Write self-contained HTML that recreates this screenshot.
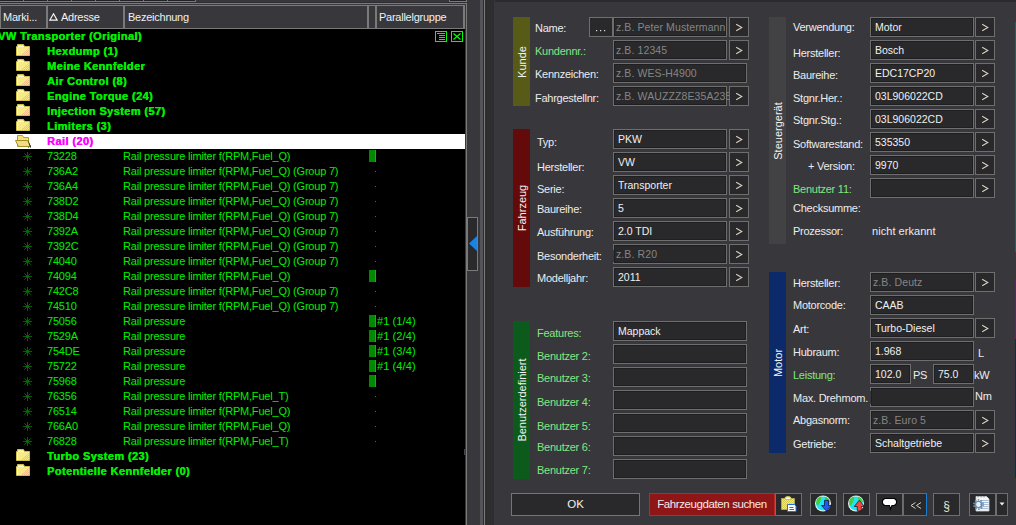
<!DOCTYPE html><html><head><meta charset="utf-8"><style>
*{margin:0;padding:0;box-sizing:border-box}
html,body{width:1016px;height:525px;overflow:hidden;background:#38373c;font-family:"Liberation Sans",sans-serif;position:relative}
.a{position:absolute}
.t{position:absolute;white-space:nowrap;font-size:11px;line-height:15px;color:#00f000;letter-spacing:-0.2px}
.b{font-weight:bold;letter-spacing:0.4px;text-shadow:0.35px 0 0 currentColor}
.hd{position:absolute;top:6px;height:22px;background:#38373c;border:1px solid #7a7a7a;border-top:none;border-bottom:none}
.ht{position:absolute;top:10px;font-size:11px;line-height:14px;color:#f0f0f0;white-space:nowrap;letter-spacing:-0.25px}
.lbl{position:absolute;white-space:nowrap;font-size:11px;line-height:14px;color:#ececec;letter-spacing:-0.25px}
.g{color:#80e880}
.inp{position:absolute;height:20px;background:#29292b;border:1px solid #6e6e6e;box-shadow:inset 0 0 0 1px #1f1f21}
.it{position:absolute;left:4px;top:3px;font-size:10.5px;line-height:13px;color:#f0f0f0;white-space:nowrap}
.ph{color:#858585;font-size:10.5px;left:2px;top:3px;letter-spacing:0.1px}
.btn{position:absolute;width:20px;height:20px;background:#29292b;border:1px solid #6e6e6e}
.chev{position:absolute;left:-1px;top:-1px}
.bar{position:absolute;width:17px}
.bt{position:absolute;left:50%;top:50%;white-space:nowrap;font-size:11px;line-height:12px;color:#f4f4f4;transform:translate(-50%,-50%) rotate(-90deg)}
</style></head><body>
<div class="a" style="left:0;top:0;width:467px;height:6px;background:#38373c"></div>
<div class="a" style="left:0;top:0;width:196px;height:2px;background:#7a7a7a"></div>
<div class="a" style="left:0px;top:0;width:23px;height:1px;background:#222226"></div>
<div class="a" style="left:24px;top:0;width:23px;height:1px;background:#222226"></div>
<div class="a" style="left:48px;top:0;width:23px;height:1px;background:#222226"></div>
<div class="a" style="left:72px;top:0;width:23px;height:1px;background:#222226"></div>
<div class="a" style="left:96px;top:0;width:23px;height:1px;background:#222226"></div>
<div class="a" style="left:120px;top:0;width:23px;height:1px;background:#222226"></div>
<div class="a" style="left:144px;top:0;width:23px;height:1px;background:#222226"></div>
<div class="a" style="left:168px;top:0;width:27px;height:1px;background:#222226"></div>
<div class="a" style="left:449px;top:0;width:18px;height:2px;background:#7a7a7a"></div>
<div class="a" style="left:450px;top:0;width:16px;height:1px;background:#222226"></div>
<div class="a" style="left:0;top:2px;width:466px;height:1px;background:#2e2e32"></div>
<div class="a" style="left:0;top:3px;width:467px;height:1px;background:#7a7a7a"></div>
<div class="a" style="left:0;top:4px;width:465px;height:1px;background:#3a3a3e"></div>
<div class="a" style="left:0;top:5px;width:465px;height:1px;background:#7a7a7a"></div>
<div class="a" style="left:466px;top:3px;width:1px;height:522px;background:#7a7a7a"></div>
<div class="a" style="left:0;top:6px;width:465px;height:22px;background:#38373c"></div>
<div class="a" style="left:0px;top:6px;width:1px;height:22px;background:#7a7a7a"></div>
<div class="a" style="left:46px;top:6px;width:2px;height:22px;background:#7a7a7a"></div>
<div class="a" style="left:123px;top:6px;width:2px;height:22px;background:#7a7a7a"></div>
<div class="a" style="left:367px;top:6px;width:2px;height:22px;background:#7a7a7a"></div>
<div class="a" style="left:375px;top:6px;width:2px;height:22px;background:#7a7a7a"></div>
<div class="a" style="left:463px;top:6px;width:2px;height:22px;background:#7a7a7a"></div>
<div class="a" style="left:0;top:28px;width:465px;height:1px;background:#7a7a7a"></div>
<div class="ht" style="left:3px">Marki...</div>
<svg class="a" style="left:49px;top:13px" width="9" height="8"><path d="M4.5 0.8 L8.2 7.2 L0.8 7.2 Z" fill="none" stroke="#f4f4f4" stroke-width="1.2"/></svg>
<div class="ht" style="left:61px">Adresse</div>
<div class="ht" style="left:128px">Bezeichnung</div>
<div class="ht" style="left:379px">Parallelgruppe</div>
<div class="a" style="left:0;top:29px;width:465px;height:496px;background:#000"></div>
<svg width="0" height="0" style="position:absolute"><defs><pattern id="dith" width="2" height="2" patternUnits="userSpaceOnUse"><rect width="1" height="1" fill="#f4b888"/><rect x="1" y="1" width="1" height="1" fill="#f4b888"/></pattern><pattern id="clipd" width="2" height="2" patternUnits="userSpaceOnUse"><rect width="2" height="2" fill="#e8e4b0"/><rect width="1" height="1" fill="#d8cc50"/><rect x="1" y="1" width="1" height="1" fill="#d8cc50"/></pattern></defs></svg>
<svg class="a" style="left:435px;top:31px" width="12" height="11"><rect x="0.5" y="0.5" width="11" height="10" fill="none" stroke="#00ff00"/><path d="M2 2.5H10M4 4.5H10M4 6.5H10M4 8.5H10" stroke="#00ff00" stroke-width="1"/></svg>
<svg class="a" style="left:451px;top:31px" width="12" height="11"><rect x="0.5" y="0.5" width="11" height="10" fill="none" stroke="#00ff00"/><path d="M2.5 2.5L9.5 8.5M9.5 2.5L2.5 8.5" stroke="#00ff00" stroke-width="1.3"/></svg>
<div class="t b" style="left:-2px;top:29px">VW Transporter (Original)</div>
<svg class="a" style="left:15px;top:43px" width="16" height="14"><path d="M2.5 1.5H8.5L9.5 3.5H14.5V12.5H1.5V3.5H2.5Z" fill="#f8ea88" stroke="#d0c048"/><path d="M3 3.5H9M2.5 4V12" stroke="#fffce0"/><path d="M6 12L14 5V12Z" fill="url(#dith)"/></svg>
<div class="t b" style="left:47px;top:44px">Hexdump (1)</div>
<svg class="a" style="left:15px;top:58px" width="16" height="14"><path d="M2.5 1.5H8.5L9.5 3.5H14.5V12.5H1.5V3.5H2.5Z" fill="#f8ea88" stroke="#d0c048"/><path d="M3 3.5H9M2.5 4V12" stroke="#fffce0"/><path d="M6 12L14 5V12Z" fill="url(#dith)"/></svg>
<div class="t b" style="left:47px;top:59px">Meine Kennfelder</div>
<svg class="a" style="left:15px;top:73px" width="16" height="14"><path d="M2.5 1.5H8.5L9.5 3.5H14.5V12.5H1.5V3.5H2.5Z" fill="#f8ea88" stroke="#d0c048"/><path d="M3 3.5H9M2.5 4V12" stroke="#fffce0"/><path d="M6 12L14 5V12Z" fill="url(#dith)"/></svg>
<div class="t b" style="left:47px;top:74px">Air Control (8)</div>
<svg class="a" style="left:15px;top:88px" width="16" height="14"><path d="M2.5 1.5H8.5L9.5 3.5H14.5V12.5H1.5V3.5H2.5Z" fill="#f8ea88" stroke="#d0c048"/><path d="M3 3.5H9M2.5 4V12" stroke="#fffce0"/><path d="M6 12L14 5V12Z" fill="url(#dith)"/></svg>
<div class="t b" style="left:47px;top:89px">Engine Torque (24)</div>
<svg class="a" style="left:15px;top:103px" width="16" height="14"><path d="M2.5 1.5H8.5L9.5 3.5H14.5V12.5H1.5V3.5H2.5Z" fill="#f8ea88" stroke="#d0c048"/><path d="M3 3.5H9M2.5 4V12" stroke="#fffce0"/><path d="M6 12L14 5V12Z" fill="url(#dith)"/></svg>
<div class="t b" style="left:47px;top:104px">Injection System (57)</div>
<svg class="a" style="left:15px;top:118px" width="16" height="14"><path d="M2.5 1.5H8.5L9.5 3.5H14.5V12.5H1.5V3.5H2.5Z" fill="#f8ea88" stroke="#d0c048"/><path d="M3 3.5H9M2.5 4V12" stroke="#fffce0"/><path d="M6 12L14 5V12Z" fill="url(#dith)"/></svg>
<div class="t b" style="left:47px;top:119px">Limiters (3)</div>
<div class="a" style="left:0;top:134px;width:465px;height:15px;background:#fff"></div>
<svg class="a" style="left:15px;top:134px" width="17" height="15"><path d="M2.5 1.5H7.5L8.5 3.5H13.5V12.5H2.5Z" fill="#f6e27a" stroke="#b0a030"/><path d="M14 6V13.5H13Z" fill="#000"/><path d="M0.5 6.5H12.5L15.5 12.5H3.5Z" fill="#f2da88" stroke="#a09020"/><path d="M13 6L16 12.5V13.5H15Z" fill="#222"/></svg>
<div class="t b" style="left:47px;top:134px;color:#ff00ff">Rail (20)</div>
<svg class="a" style="left:23px;top:152px" width="9" height="9"><path d="M4.5 0V9M0 4.5H9M1.3 1.3L7.7 7.7M7.7 1.3L1.3 7.7" stroke="#0a6a0a" stroke-width="0.9"/><circle cx="4.5" cy="4.5" r="1.3" fill="#0a6a0a"/></svg>
<div class="t" style="left:47px;top:149px">73228</div>
<div class="t" style="left:123px;top:149px">Rail pressure limiter f(RPM,Fuel_Q)</div>
<div class="a" style="left:369px;top:150px;width:7px;height:12px;background:#008a00;border-right:1px solid #00c000"></div>
<svg class="a" style="left:23px;top:167px" width="9" height="9"><path d="M4.5 0V9M0 4.5H9M1.3 1.3L7.7 7.7M7.7 1.3L1.3 7.7" stroke="#0a6a0a" stroke-width="0.9"/><circle cx="4.5" cy="4.5" r="1.3" fill="#0a6a0a"/></svg>
<div class="t" style="left:47px;top:164px">736A2</div>
<div class="t" style="left:123px;top:164px">Rail pressure limiter f(RPM,Fuel_Q) (Group 7)</div>
<div class="a" style="left:375px;top:171px;width:1px;height:1px;background:#00a000"></div>
<svg class="a" style="left:23px;top:182px" width="9" height="9"><path d="M4.5 0V9M0 4.5H9M1.3 1.3L7.7 7.7M7.7 1.3L1.3 7.7" stroke="#0a6a0a" stroke-width="0.9"/><circle cx="4.5" cy="4.5" r="1.3" fill="#0a6a0a"/></svg>
<div class="t" style="left:47px;top:179px">736A4</div>
<div class="t" style="left:123px;top:179px">Rail pressure limiter f(RPM,Fuel_Q) (Group 7)</div>
<div class="a" style="left:375px;top:186px;width:1px;height:1px;background:#00a000"></div>
<svg class="a" style="left:23px;top:197px" width="9" height="9"><path d="M4.5 0V9M0 4.5H9M1.3 1.3L7.7 7.7M7.7 1.3L1.3 7.7" stroke="#0a6a0a" stroke-width="0.9"/><circle cx="4.5" cy="4.5" r="1.3" fill="#0a6a0a"/></svg>
<div class="t" style="left:47px;top:194px">738D2</div>
<div class="t" style="left:123px;top:194px">Rail pressure limiter f(RPM,Fuel_Q) (Group 7)</div>
<div class="a" style="left:375px;top:201px;width:1px;height:1px;background:#00a000"></div>
<svg class="a" style="left:23px;top:212px" width="9" height="9"><path d="M4.5 0V9M0 4.5H9M1.3 1.3L7.7 7.7M7.7 1.3L1.3 7.7" stroke="#0a6a0a" stroke-width="0.9"/><circle cx="4.5" cy="4.5" r="1.3" fill="#0a6a0a"/></svg>
<div class="t" style="left:47px;top:209px">738D4</div>
<div class="t" style="left:123px;top:209px">Rail pressure limiter f(RPM,Fuel_Q) (Group 7)</div>
<div class="a" style="left:375px;top:216px;width:1px;height:1px;background:#00a000"></div>
<svg class="a" style="left:23px;top:227px" width="9" height="9"><path d="M4.5 0V9M0 4.5H9M1.3 1.3L7.7 7.7M7.7 1.3L1.3 7.7" stroke="#0a6a0a" stroke-width="0.9"/><circle cx="4.5" cy="4.5" r="1.3" fill="#0a6a0a"/></svg>
<div class="t" style="left:47px;top:224px">7392A</div>
<div class="t" style="left:123px;top:224px">Rail pressure limiter f(RPM,Fuel_Q) (Group 7)</div>
<div class="a" style="left:375px;top:231px;width:1px;height:1px;background:#00a000"></div>
<svg class="a" style="left:23px;top:242px" width="9" height="9"><path d="M4.5 0V9M0 4.5H9M1.3 1.3L7.7 7.7M7.7 1.3L1.3 7.7" stroke="#0a6a0a" stroke-width="0.9"/><circle cx="4.5" cy="4.5" r="1.3" fill="#0a6a0a"/></svg>
<div class="t" style="left:47px;top:239px">7392C</div>
<div class="t" style="left:123px;top:239px">Rail pressure limiter f(RPM,Fuel_Q) (Group 7)</div>
<div class="a" style="left:375px;top:246px;width:1px;height:1px;background:#00a000"></div>
<svg class="a" style="left:23px;top:257px" width="9" height="9"><path d="M4.5 0V9M0 4.5H9M1.3 1.3L7.7 7.7M7.7 1.3L1.3 7.7" stroke="#0a6a0a" stroke-width="0.9"/><circle cx="4.5" cy="4.5" r="1.3" fill="#0a6a0a"/></svg>
<div class="t" style="left:47px;top:254px">74040</div>
<div class="t" style="left:123px;top:254px">Rail pressure limiter f(RPM,Fuel_Q) (Group 7)</div>
<div class="a" style="left:375px;top:261px;width:1px;height:1px;background:#00a000"></div>
<svg class="a" style="left:23px;top:272px" width="9" height="9"><path d="M4.5 0V9M0 4.5H9M1.3 1.3L7.7 7.7M7.7 1.3L1.3 7.7" stroke="#0a6a0a" stroke-width="0.9"/><circle cx="4.5" cy="4.5" r="1.3" fill="#0a6a0a"/></svg>
<div class="t" style="left:47px;top:269px">74094</div>
<div class="t" style="left:123px;top:269px">Rail pressure limiter f(RPM,Fuel_Q)</div>
<div class="a" style="left:369px;top:270px;width:7px;height:12px;background:#008a00;border-right:1px solid #00c000"></div>
<svg class="a" style="left:23px;top:287px" width="9" height="9"><path d="M4.5 0V9M0 4.5H9M1.3 1.3L7.7 7.7M7.7 1.3L1.3 7.7" stroke="#0a6a0a" stroke-width="0.9"/><circle cx="4.5" cy="4.5" r="1.3" fill="#0a6a0a"/></svg>
<div class="t" style="left:47px;top:284px">742C8</div>
<div class="t" style="left:123px;top:284px">Rail pressure limiter f(RPM,Fuel_Q) (Group 7)</div>
<div class="a" style="left:375px;top:291px;width:1px;height:1px;background:#00a000"></div>
<svg class="a" style="left:23px;top:302px" width="9" height="9"><path d="M4.5 0V9M0 4.5H9M1.3 1.3L7.7 7.7M7.7 1.3L1.3 7.7" stroke="#0a6a0a" stroke-width="0.9"/><circle cx="4.5" cy="4.5" r="1.3" fill="#0a6a0a"/></svg>
<div class="t" style="left:47px;top:299px">74510</div>
<div class="t" style="left:123px;top:299px">Rail pressure limiter f(RPM,Fuel_Q) (Group 7)</div>
<div class="a" style="left:375px;top:306px;width:1px;height:1px;background:#00a000"></div>
<svg class="a" style="left:23px;top:317px" width="9" height="9"><path d="M4.5 0V9M0 4.5H9M1.3 1.3L7.7 7.7M7.7 1.3L1.3 7.7" stroke="#0a6a0a" stroke-width="0.9"/><circle cx="4.5" cy="4.5" r="1.3" fill="#0a6a0a"/></svg>
<div class="t" style="left:47px;top:314px">75056</div>
<div class="t" style="left:123px;top:314px">Rail pressure</div>
<div class="a" style="left:369px;top:315px;width:7px;height:12px;background:#008a00;border-right:1px solid #00c000"></div>
<div class="t" style="left:377px;top:314px;letter-spacing:0.1px">#1 (1/4)</div>
<svg class="a" style="left:23px;top:332px" width="9" height="9"><path d="M4.5 0V9M0 4.5H9M1.3 1.3L7.7 7.7M7.7 1.3L1.3 7.7" stroke="#0a6a0a" stroke-width="0.9"/><circle cx="4.5" cy="4.5" r="1.3" fill="#0a6a0a"/></svg>
<div class="t" style="left:47px;top:329px">7529A</div>
<div class="t" style="left:123px;top:329px">Rail pressure</div>
<div class="a" style="left:369px;top:330px;width:7px;height:12px;background:#008a00;border-right:1px solid #00c000"></div>
<div class="t" style="left:377px;top:329px;letter-spacing:0.1px">#1 (2/4)</div>
<svg class="a" style="left:23px;top:347px" width="9" height="9"><path d="M4.5 0V9M0 4.5H9M1.3 1.3L7.7 7.7M7.7 1.3L1.3 7.7" stroke="#0a6a0a" stroke-width="0.9"/><circle cx="4.5" cy="4.5" r="1.3" fill="#0a6a0a"/></svg>
<div class="t" style="left:47px;top:344px">754DE</div>
<div class="t" style="left:123px;top:344px">Rail pressure</div>
<div class="a" style="left:369px;top:345px;width:7px;height:12px;background:#008a00;border-right:1px solid #00c000"></div>
<div class="t" style="left:377px;top:344px;letter-spacing:0.1px">#1 (3/4)</div>
<svg class="a" style="left:23px;top:362px" width="9" height="9"><path d="M4.5 0V9M0 4.5H9M1.3 1.3L7.7 7.7M7.7 1.3L1.3 7.7" stroke="#0a6a0a" stroke-width="0.9"/><circle cx="4.5" cy="4.5" r="1.3" fill="#0a6a0a"/></svg>
<div class="t" style="left:47px;top:359px">75722</div>
<div class="t" style="left:123px;top:359px">Rail pressure</div>
<div class="a" style="left:369px;top:360px;width:7px;height:12px;background:#008a00;border-right:1px solid #00c000"></div>
<div class="t" style="left:377px;top:359px;letter-spacing:0.1px">#1 (4/4)</div>
<svg class="a" style="left:23px;top:377px" width="9" height="9"><path d="M4.5 0V9M0 4.5H9M1.3 1.3L7.7 7.7M7.7 1.3L1.3 7.7" stroke="#0a6a0a" stroke-width="0.9"/><circle cx="4.5" cy="4.5" r="1.3" fill="#0a6a0a"/></svg>
<div class="t" style="left:47px;top:374px">75968</div>
<div class="t" style="left:123px;top:374px">Rail pressure</div>
<div class="a" style="left:369px;top:375px;width:7px;height:12px;background:#008a00;border-right:1px solid #00c000"></div>
<svg class="a" style="left:23px;top:392px" width="9" height="9"><path d="M4.5 0V9M0 4.5H9M1.3 1.3L7.7 7.7M7.7 1.3L1.3 7.7" stroke="#0a6a0a" stroke-width="0.9"/><circle cx="4.5" cy="4.5" r="1.3" fill="#0a6a0a"/></svg>
<div class="t" style="left:47px;top:389px">76356</div>
<div class="t" style="left:123px;top:389px">Rail pressure limiter f(RPM,Fuel_T)</div>
<div class="a" style="left:375px;top:396px;width:1px;height:1px;background:#00a000"></div>
<svg class="a" style="left:23px;top:407px" width="9" height="9"><path d="M4.5 0V9M0 4.5H9M1.3 1.3L7.7 7.7M7.7 1.3L1.3 7.7" stroke="#0a6a0a" stroke-width="0.9"/><circle cx="4.5" cy="4.5" r="1.3" fill="#0a6a0a"/></svg>
<div class="t" style="left:47px;top:404px">76514</div>
<div class="t" style="left:123px;top:404px">Rail pressure limiter f(RPM,Fuel_Q)</div>
<div class="a" style="left:375px;top:411px;width:1px;height:1px;background:#00a000"></div>
<svg class="a" style="left:23px;top:422px" width="9" height="9"><path d="M4.5 0V9M0 4.5H9M1.3 1.3L7.7 7.7M7.7 1.3L1.3 7.7" stroke="#0a6a0a" stroke-width="0.9"/><circle cx="4.5" cy="4.5" r="1.3" fill="#0a6a0a"/></svg>
<div class="t" style="left:47px;top:419px">766A0</div>
<div class="t" style="left:123px;top:419px">Rail pressure limiter f(RPM,Fuel_Q)</div>
<div class="a" style="left:375px;top:426px;width:1px;height:1px;background:#00a000"></div>
<svg class="a" style="left:23px;top:437px" width="9" height="9"><path d="M4.5 0V9M0 4.5H9M1.3 1.3L7.7 7.7M7.7 1.3L1.3 7.7" stroke="#0a6a0a" stroke-width="0.9"/><circle cx="4.5" cy="4.5" r="1.3" fill="#0a6a0a"/></svg>
<div class="t" style="left:47px;top:434px">76828</div>
<div class="t" style="left:123px;top:434px">Rail pressure limiter f(RPM,Fuel_T)</div>
<div class="a" style="left:375px;top:441px;width:1px;height:1px;background:#00a000"></div>
<svg class="a" style="left:15px;top:448px" width="16" height="14"><path d="M2.5 1.5H8.5L9.5 3.5H14.5V12.5H1.5V3.5H2.5Z" fill="#f8ea88" stroke="#d0c048"/><path d="M3 3.5H9M2.5 4V12" stroke="#fffce0"/><path d="M6 12L14 5V12Z" fill="url(#dith)"/></svg>
<div class="t b" style="left:47px;top:449px">Turbo System (23)</div>
<svg class="a" style="left:15px;top:463px" width="16" height="14"><path d="M2.5 1.5H8.5L9.5 3.5H14.5V12.5H1.5V3.5H2.5Z" fill="#f8ea88" stroke="#d0c048"/><path d="M3 3.5H9M2.5 4V12" stroke="#fffce0"/><path d="M6 12L14 5V12Z" fill="url(#dith)"/></svg>
<div class="t b" style="left:47px;top:464px">Potentielle Kennfelder (0)</div>
<div class="a" style="left:464px;top:449px;width:1px;height:6px;background:#48484c"></div>
<div class="a" style="left:467px;top:0;width:13px;height:525px;background:#38373c"></div>
<div class="a" style="left:467px;top:217px;width:11px;height:54px;background:#2a2a2c;border:1px solid #7a7a7a"></div>
<svg class="a" style="left:468px;top:235px" width="10" height="17"><path d="M1 8.5L9 1V16Z" fill="#1a84e6"/></svg>
<div class="a" style="left:480px;top:0;width:3px;height:525px;background:#555559"></div>
<div class="a" style="left:483px;top:0;width:1px;height:525px;background:#2e2e32"></div>
<div class="a" style="left:484px;top:0;width:1px;height:525px;background:#7a7a7a"></div>
<div class="a" style="left:485px;top:0;width:9px;height:525px;background:#2e2e31"></div>
<div class="a" style="left:494px;top:0;width:522px;height:525px;background:#38373c"></div>
<div class="a" style="left:495px;top:0;width:521px;height:2px;background:#2c2c30"></div>
<div class="bar" style="left:513px;top:17px;height:89px;background:#575b17"><div class="bt">Kunde</div></div>
<div class="lbl" style="left:535px;top:21px">Name:</div>
<div class="btn" style="left:589px;top:17px;width:24px"><svg class="chev" width="24" height="20"><rect x="7" y="13" width="1.2" height="1.2" fill="#ddd"/><rect x="11" y="13" width="1.2" height="1.2" fill="#ddd"/><rect x="15" y="13" width="1.2" height="1.2" fill="#ddd"/></svg></div>
<div class="inp" style="left:613px;top:17px;width:114px"><div class="it ph">z.B. Peter Mustermann</div></div>
<div class="btn" style="left:729px;top:17px"><svg class="chev" width="20" height="20"><path d="M7.2 7.3L12.8 10.5L7.2 13.7" fill="none" stroke="#dcd4c4" stroke-width="1.05"/></svg></div>
<div class="lbl g" style="left:535px;top:44px">Kundennr.:</div>
<div class="inp" style="left:613px;top:40px;width:114px"><div class="it ph">z.B. 12345</div></div>
<div class="btn" style="left:729px;top:40px"><svg class="chev" width="20" height="20"><path d="M7.2 7.3L12.8 10.5L7.2 13.7" fill="none" stroke="#dcd4c4" stroke-width="1.05"/></svg></div>
<div class="lbl" style="left:535px;top:67px">Kennzeichen:</div>
<div class="inp" style="left:613px;top:63px;width:134px"><div class="it ph">z.B. WES-H4900</div></div>
<div class="lbl" style="left:535px;top:91px">Fahrgestellnr:</div>
<div class="inp" style="left:613px;top:86px;width:114px"><div class="it ph">z.B. WAUZZZ8E35A235</div></div>
<div class="btn" style="left:729px;top:86px"><svg class="chev" width="20" height="20"><path d="M7.2 7.3L12.8 10.5L7.2 13.7" fill="none" stroke="#dcd4c4" stroke-width="1.05"/></svg></div>
<div class="bar" style="left:513px;top:129px;height:158px;background:#650a0a"><div class="bt">Fahrzeug</div></div>
<div class="lbl" style="left:537px;top:135px">Typ:</div>
<div class="inp" style="left:613px;top:129px;width:114px"><div class="it">PKW</div></div>
<div class="btn" style="left:729px;top:129px"><svg class="chev" width="20" height="20"><path d="M7.2 7.3L12.8 10.5L7.2 13.7" fill="none" stroke="#dcd4c4" stroke-width="1.05"/></svg></div>
<div class="lbl" style="left:537px;top:160px">Hersteller:</div>
<div class="inp" style="left:613px;top:152px;width:114px"><div class="it">VW</div></div>
<div class="btn" style="left:729px;top:152px"><svg class="chev" width="20" height="20"><path d="M7.2 7.3L12.8 10.5L7.2 13.7" fill="none" stroke="#dcd4c4" stroke-width="1.05"/></svg></div>
<div class="lbl" style="left:537px;top:182px">Serie:</div>
<div class="inp" style="left:613px;top:175px;width:114px"><div class="it">Transporter</div></div>
<div class="btn" style="left:729px;top:175px"><svg class="chev" width="20" height="20"><path d="M7.2 7.3L12.8 10.5L7.2 13.7" fill="none" stroke="#dcd4c4" stroke-width="1.05"/></svg></div>
<div class="lbl" style="left:537px;top:202px">Baureihe:</div>
<div class="inp" style="left:613px;top:198px;width:114px"><div class="it">5</div></div>
<div class="btn" style="left:729px;top:198px"><svg class="chev" width="20" height="20"><path d="M7.2 7.3L12.8 10.5L7.2 13.7" fill="none" stroke="#dcd4c4" stroke-width="1.05"/></svg></div>
<div class="lbl" style="left:537px;top:225px">Ausführung:</div>
<div class="inp" style="left:613px;top:221px;width:114px"><div class="it">2.0 TDI</div></div>
<div class="btn" style="left:729px;top:221px"><svg class="chev" width="20" height="20"><path d="M7.2 7.3L12.8 10.5L7.2 13.7" fill="none" stroke="#dcd4c4" stroke-width="1.05"/></svg></div>
<div class="lbl" style="left:537px;top:249px">Besonderheit:</div>
<div class="inp" style="left:613px;top:244px;width:114px"><div class="it ph">z.B. R20</div></div>
<div class="btn" style="left:729px;top:244px"><svg class="chev" width="20" height="20"><path d="M7.2 7.3L12.8 10.5L7.2 13.7" fill="none" stroke="#dcd4c4" stroke-width="1.05"/></svg></div>
<div class="lbl" style="left:537px;top:271px">Modelljahr:</div>
<div class="inp" style="left:613px;top:267px;width:114px"><div class="it">2011</div></div>
<div class="btn" style="left:729px;top:267px"><svg class="chev" width="20" height="20"><path d="M7.2 7.3L12.8 10.5L7.2 13.7" fill="none" stroke="#dcd4c4" stroke-width="1.05"/></svg></div>
<div class="a" style="left:613px;top:250px;width:1px;height:12px;background:#38373c"></div>
<div class="bar" style="left:513px;top:321px;height:158px;background:#0d5a1d"><div class="bt">Benutzerdefiniert</div></div>
<div class="lbl g" style="left:537px;top:326px">Features:</div>
<div class="inp" style="left:613px;top:321px;width:134px"><div class="it">Mappack</div></div>
<div class="lbl g" style="left:537px;top:349px">Benutzer 2:</div>
<div class="inp" style="left:613px;top:344px;width:134px"></div>
<div class="lbl g" style="left:537px;top:371px">Benutzer 3:</div>
<div class="inp" style="left:613px;top:367px;width:134px"></div>
<div class="lbl g" style="left:537px;top:395px">Benutzer 4:</div>
<div class="inp" style="left:613px;top:390px;width:134px"></div>
<div class="lbl g" style="left:537px;top:419px">Benutzer 5:</div>
<div class="inp" style="left:613px;top:413px;width:134px"></div>
<div class="lbl g" style="left:537px;top:440px">Benutzer 6:</div>
<div class="inp" style="left:613px;top:436px;width:134px"></div>
<div class="lbl g" style="left:537px;top:463px">Benutzer 7:</div>
<div class="inp" style="left:613px;top:459px;width:134px"></div>
<div class="bar" style="left:769px;top:17px;height:227px;background:#424245"><div class="bt">Steuergerät</div></div>
<div class="lbl" style="left:793px;top:20px">Verwendung:</div>
<div class="inp" style="left:870px;top:17px;width:104px"><div class="it">Motor</div></div>
<div class="btn" style="left:975px;top:17px"><svg class="chev" width="20" height="20"><path d="M7.2 7.3L12.8 10.5L7.2 13.7" fill="none" stroke="#dcd4c4" stroke-width="1.05"/></svg></div>
<div class="lbl" style="left:793px;top:46px">Hersteller:</div>
<div class="inp" style="left:870px;top:40px;width:104px"><div class="it">Bosch</div></div>
<div class="btn" style="left:975px;top:40px"><svg class="chev" width="20" height="20"><path d="M7.2 7.3L12.8 10.5L7.2 13.7" fill="none" stroke="#dcd4c4" stroke-width="1.05"/></svg></div>
<div class="lbl" style="left:793px;top:68px">Baureihe:</div>
<div class="inp" style="left:870px;top:63px;width:104px"><div class="it">EDC17CP20</div></div>
<div class="btn" style="left:975px;top:63px"><svg class="chev" width="20" height="20"><path d="M7.2 7.3L12.8 10.5L7.2 13.7" fill="none" stroke="#dcd4c4" stroke-width="1.05"/></svg></div>
<div class="lbl" style="left:793px;top:91px">Stgnr.Her.:</div>
<div class="inp" style="left:870px;top:86px;width:104px"><div class="it">03L906022CD</div></div>
<div class="btn" style="left:975px;top:86px"><svg class="chev" width="20" height="20"><path d="M7.2 7.3L12.8 10.5L7.2 13.7" fill="none" stroke="#dcd4c4" stroke-width="1.05"/></svg></div>
<div class="lbl" style="left:793px;top:113px">Stgnr.Stg.:</div>
<div class="inp" style="left:870px;top:109px;width:104px"><div class="it">03L906022CD</div></div>
<div class="btn" style="left:975px;top:109px"><svg class="chev" width="20" height="20"><path d="M7.2 7.3L12.8 10.5L7.2 13.7" fill="none" stroke="#dcd4c4" stroke-width="1.05"/></svg></div>
<div class="lbl" style="left:793px;top:137px">Softwarestand:</div>
<div class="inp" style="left:870px;top:132px;width:104px"><div class="it">535350</div></div>
<div class="btn" style="left:975px;top:132px"><svg class="chev" width="20" height="20"><path d="M7.2 7.3L12.8 10.5L7.2 13.7" fill="none" stroke="#dcd4c4" stroke-width="1.05"/></svg></div>
<div class="lbl" style="left:808px;top:159px">+ Version:</div>
<div class="inp" style="left:870px;top:155px;width:104px"><div class="it">9970</div></div>
<div class="btn" style="left:975px;top:155px"><svg class="chev" width="20" height="20"><path d="M7.2 7.3L12.8 10.5L7.2 13.7" fill="none" stroke="#dcd4c4" stroke-width="1.05"/></svg></div>
<div class="lbl g" style="left:793px;top:182px">Benutzer 11:</div>
<div class="inp" style="left:870px;top:178px;width:104px"></div>
<div class="btn" style="left:975px;top:178px"><svg class="chev" width="20" height="20"><path d="M7.2 7.3L12.8 10.5L7.2 13.7" fill="none" stroke="#dcd4c4" stroke-width="1.05"/></svg></div>
<div class="lbl" style="left:793px;top:201px">Checksumme:</div>
<div class="lbl" style="left:793px;top:224px">Prozessor:</div>
<div class="lbl" style="left:872px;top:224px;letter-spacing:0.05px">nicht erkannt</div>
<div class="bar" style="left:769px;top:272px;height:181px;background:#0c2a6a"><div class="bt">Motor</div></div>
<div class="lbl" style="left:793px;top:276px">Hersteller:</div>
<div class="inp" style="left:870px;top:272px;width:104px"><div class="it ph">z.B. Deutz</div></div>
<div class="btn" style="left:975px;top:272px"><svg class="chev" width="20" height="20"><path d="M7.2 7.3L12.8 10.5L7.2 13.7" fill="none" stroke="#dcd4c4" stroke-width="1.05"/></svg></div>
<div class="lbl" style="left:793px;top:298px">Motorcode:</div>
<div class="inp" style="left:870px;top:295px;width:104px"><div class="it">CAAB</div></div>
<div class="lbl" style="left:793px;top:322px">Art:</div>
<div class="inp" style="left:870px;top:318px;width:104px"><div class="it">Turbo-Diesel</div></div>
<div class="btn" style="left:975px;top:318px"><svg class="chev" width="20" height="20"><path d="M7.2 7.3L12.8 10.5L7.2 13.7" fill="none" stroke="#dcd4c4" stroke-width="1.05"/></svg></div>
<div class="lbl" style="left:793px;top:345px">Hubraum:</div>
<div class="inp" style="left:870px;top:341px;width:104px"><div class="it">1.968</div></div>
<div class="lbl g" style="left:793px;top:368px">Leistung:</div>
<div class="inp" style="left:870px;top:364px;width:41px"><div class="it">102.0</div></div>
<div class="lbl" style="left:913px;top:368px">PS</div>
<div class="inp" style="left:933px;top:364px;width:41px"><div class="it">75.0</div></div>
<div class="lbl" style="left:974px;top:368px">kW</div>
<div class="lbl" style="left:793px;top:391px">Max. Drehmom.</div>
<div class="inp" style="left:870px;top:387px;width:104px"></div>
<div class="lbl" style="left:793px;top:413px">Abgasnorm:</div>
<div class="inp" style="left:870px;top:410px;width:104px"><div class="it ph">z.B. Euro 5</div></div>
<div class="btn" style="left:975px;top:410px"><svg class="chev" width="20" height="20"><path d="M7.2 7.3L12.8 10.5L7.2 13.7" fill="none" stroke="#dcd4c4" stroke-width="1.05"/></svg></div>
<div class="lbl" style="left:793px;top:437px">Getriebe:</div>
<div class="inp" style="left:870px;top:433px;width:104px"><div class="it">Schaltgetriebe</div></div>
<div class="btn" style="left:975px;top:433px"><svg class="chev" width="20" height="20"><path d="M7.2 7.3L12.8 10.5L7.2 13.7" fill="none" stroke="#dcd4c4" stroke-width="1.05"/></svg></div>
<div class="a" style="left:870px;top:391px;width:1px;height:13px;background:#38373c"></div>
<div class="lbl" style="left:978px;top:346px">L</div>
<div class="lbl" style="left:975px;top:389px">Nm</div>
<div class="a" style="left:1015px;top:22px;width:1px;height:230px;background:#0e6a5a"></div>
<div class="a" style="left:1015px;top:280px;width:1px;height:59px;background:#6a1a7a"></div>
<div class="a" style="left:1015px;top:339px;width:1px;height:139px;background:#0e2a5a"></div>
<div class="a" style="left:511px;top:493px;width:129px;height:23px;background:#29292b;border:1px solid #1a8ee0"><div class="a" style="left:0;right:0;top:3px;text-align:center;font-size:11.5px;line-height:14px;color:#f0f0f0">OK</div></div>
<div class="a" style="left:649px;top:493px;width:126px;height:23px;background:#8e1616;border:1px solid #c02626"><div class="a" style="left:0;right:0;top:3px;text-align:center;font-size:11.5px;line-height:14px;color:#f4e8e8;letter-spacing:-0.4px">Fahrzeugdaten suchen</div></div>
<div class="a" style="left:775px;top:493px;width:27px;height:23px;background:#29292b;border:1px solid #6e6e6e"><svg class="a" style="left:-1px;top:-1px" width="27" height="23"><path d="M6.5 5.5H19.5V16.5H6.5Z" fill="url(#clipd)" stroke="#b8b060" stroke-width="0.8"/><path d="M10 4.5Q13 2 16 4.5V6.5H10Z" fill="#f8f080" stroke="#c8c040" stroke-width="0.8"/><path d="M11 5.5H15" stroke="#fff" stroke-width="1"/><path d="M12.5 11.5H19.5L21 13V18.5H12.5Z" fill="#fff" stroke="#1a70e8" stroke-width="1"/><path d="M14.5 14.5H18.5M14.5 16.5H19" stroke="#1a6ae8" stroke-width="1"/></svg></div>
<div class="a" style="left:810px;top:493px;width:27px;height:23px;background:#29292b;border:1px solid #6e6e6e"><svg class="a" style="left:-1px;top:-1px" width="27" height="23"><circle cx="13" cy="10.5" r="8" fill="#f4f4f4"/><circle cx="13" cy="10.5" r="7" fill="#20e4f4"/><path d="M6.5 7C7.5 5 9.5 3.8 11.5 3.6L10.5 8L8 12.5L6.2 11Z" fill="#44cc3c"/><path d="M14.5 3.6C17.5 4.2 19.5 6.5 20 9L16 8.5Z" fill="#44cc3c"/><path d="M14.5 7.3H18.5V12.5H21.5L16.5 18.2L11.5 12.5H14.5Z" fill="#2458f4" stroke="#0a0a20" stroke-width="0.7"/></svg></div>
<div class="a" style="left:843px;top:493px;width:27px;height:23px;background:#29292b;border:1px solid #6e6e6e"><svg class="a" style="left:-1px;top:-1px" width="27" height="23"><circle cx="13" cy="10.5" r="8" fill="#f4f4f4"/><circle cx="13" cy="10.5" r="7" fill="#20e4f4"/><path d="M6.5 7C7.5 5 9.5 3.8 11.5 3.6L10.5 8L8 12.5L6.2 11Z" fill="#44cc3c"/><path d="M14.5 3.6C17.5 4.2 19.5 6.5 20 9L16 8.5Z" fill="#44cc3c"/><path d="M16.3 7.2L21.3 13.5H18.3V17.8H14.3V13.5H11.3Z" fill="#f44848" stroke="#200a0a" stroke-width="0.7"/></svg></div>
<div class="a" style="left:876px;top:493px;width:27px;height:23px;background:#29292b;border:1px solid #6e6e6e"><svg class="a" style="left:-1px;top:-1px" width="27" height="23"><path d="M8.5 5.5H18.5L20.5 7.5V10.5L18.5 12.5H16L14.5 16.2L13.5 12.5H8.5L6.5 10.5V7.5Z" fill="#fff" stroke="#000" stroke-width="1.1"/></svg></div>
<div class="a" style="left:903px;top:493px;width:24px;height:23px;background:#29292b;border:1px solid #1a7ed0"><svg class="a" style="left:-1px;top:-1px" width="24" height="23"><path d="M12.5 9.5L8 12.5L12.5 15.5M18 9.5L13.5 12.5L18 15.5" fill="none" stroke="#d8cfc0" stroke-width="1"/></svg></div>
<div class="a" style="left:933px;top:493px;width:27px;height:23px;background:#29292b;border:1px solid #6e6e6e"><svg class="a" style="left:-1px;top:-1px" width="27" height="23"><text x="13.5" y="17" text-anchor="middle" font-family="Liberation Sans" font-size="12" fill="#e8e0d0">§</text></svg></div>
<div class="a" style="left:969px;top:493px;width:27px;height:23px;background:#29292b;border:1px solid #6e6e6e"><svg class="a" style="left:-1px;top:-1px" width="27" height="23"><path d="M7 3.5H17.5L20 6V18H7Z" fill="#f6f6f6" stroke="#d0d4d8" stroke-width="0.8"/><path d="M8 3.8H10M11 3.8H13M14 3.8H16" stroke="#888" stroke-width="0.8"/><path d="M11 7.5H19.5M11 9.5H19.5M11 11.5H19.5M11 13.5H19.5M11 15.5H19.5" stroke="#a8bcd4" stroke-width="1"/><circle cx="9.5" cy="11.5" r="4.6" fill="none" stroke="#6f90b4" stroke-width="1.6" stroke-dasharray="1.6 1.3"/><circle cx="9.5" cy="11.5" r="3.1" fill="none" stroke="#6a8cb0" stroke-width="1.4"/><rect x="8.5" y="10.5" width="2" height="2" fill="#dfe8f0"/></svg></div>
<div class="a" style="left:996px;top:493px;width:12px;height:23px;background:#29292b;border:1px solid #6e6e6e"><svg class="a" style="left:-1px;top:-1px" width="12" height="23"><path d="M3.5 9.5H8.5L6 12.5Z" fill="#f0f0f0"/></svg></div>
</body></html>
